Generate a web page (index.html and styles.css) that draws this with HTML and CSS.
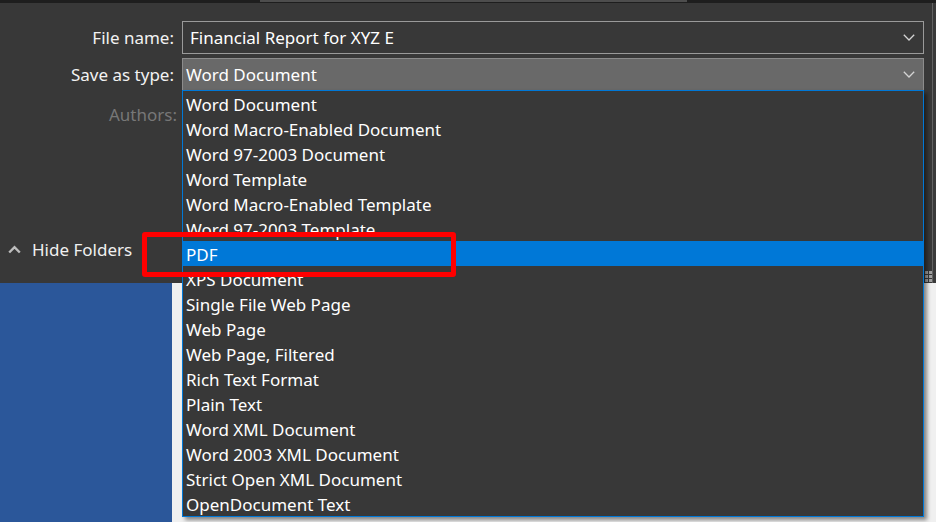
FILE: index.html
```html
<!DOCTYPE html>
<html>
<head>
<meta charset="utf-8">
<link rel="stylesheet" href="styles.css">
</head>
<body>
<div class="dialog">
  <div class="titlebar"><div class="tab"></div></div>
  <div class="form">
    <div class="lbl">File name:</div>
    <div class="field name"><span class="val">Financial Report for XYZ E</span>
      <svg class="chev" width="12" height="7" viewBox="0 0 12 7"><polyline points="0.8,0.8 6,6 11.2,0.8" fill="none" stroke="#d4d4d4" stroke-width="1.3"/></svg>
    </div>
    <div class="lbl">Save as type:</div>
    <div class="field sel"><span class="val">Word Document</span>
      <svg class="chev" width="12" height="7" viewBox="0 0 12 7"><polyline points="0.8,0.8 6,6 11.2,0.8" fill="none" stroke="#d4d4d4" stroke-width="1.3"/></svg>
    </div>
    <div class="lbl dim">Authors:</div>
    <div></div>
  </div>
  <div class="footer">
    <svg class="up" width="13" height="9" viewBox="0 0 13 9"><polyline points="1.2,7.5 6.5,2.2 11.8,7.5" fill="none" stroke="#bdbdbd" stroke-width="2.4"/></svg>
    <span class="hide">Hide Folders</span>
  </div>
  <div class="grip">
    <i></i><i></i><i></i><i></i><i></i><i></i>
  </div>
</div>
<div class="below">
  <div class="side"></div>
  <div class="rest"></div>
</div>
<ul class="list">
  <li>Word Document</li>
  <li>Word Macro-Enabled Document</li>
  <li>Word 97-2003 Document</li>
  <li>Word Template</li>
  <li>Word Macro-Enabled Template</li>
  <li>Word 97-2003 Template</li>
  <li class="active">PDF</li>
  <li>XPS Document</li>
  <li>Single File Web Page</li>
  <li>Web Page</li>
  <li>Web Page, Filtered</li>
  <li>Rich Text Format</li>
  <li>Plain Text</li>
  <li>Word XML Document</li>
  <li>Word 2003 XML Document</li>
  <li>Strict Open XML Document</li>
  <li>OpenDocument Text</li>
</ul>
<div class="callout"></div>
</body>
</html>
```
FILE: styles.css
```css
* { box-sizing: border-box; }
html, body { margin: 0; padding: 0; }
body {
  width: 936px;
  height: 522px;
  overflow: hidden;
  position: relative;
  background: #f0f0f0;
  font-family: "Noto Sans", "Open Sans", sans-serif;
  font-size: 17px;
  color: #ffffff;
}
.dialog {
  position: relative;
  height: 283px;
  display: flex;
  flex-direction: column;
  background: linear-gradient(to right, #383838 932px, #626262 932px, #626262 933px, #3a3a3a 933px);
}
.titlebar {
  height: 3px;
  background: #1e1e1e;
  padding-left: 260px;
}
.tab {
  width: 427px;
  height: 2px;
  background: #4d4d4d;
}
.form {
  margin-top: 18px;
  display: grid;
  grid-template-columns: 182px 742px;
  grid-template-rows: 33px 33px 36px;
  row-gap: 4px;
  align-items: center;
}
.lbl {
  text-align: right;
  padding-right: 8px;
  line-height: 24px;
  padding-top: 1px;
  color: #f2f2f2;
}
.lbl.dim {
  color: #777777;
  padding-right: 5px;
  align-self: start;
  padding-top: 8px;
}
.field {
  height: 33px;
  border: 1px solid #9a9a9a;
  display: flex;
  align-items: center;
  justify-content: space-between;
  padding: 0 8px 0 7px;
}
.field.sel {
  background: #696969;
  border-color: #8c8c8c;
  padding-left: 3px;
}
.val { line-height: 24px; padding-top: 1px; }
.chev { display: block; }
.footer {
  margin-top: auto;
  margin-bottom: 17px;
  height: 33px;
  display: flex;
  align-items: center;
  padding-left: 8px;
  gap: 11px;
}
.up { display: block; }
.hide { color: #f0f0f0; line-height: 24px; padding-top: 1px; }
.grip {
  position: absolute;
  right: 4px;
  bottom: 0;
  width: 10px;
  height: 12px;
  display: grid;
  grid-template-columns: 3px 3px;
  grid-auto-rows: 3px;
  column-gap: 1px;
  row-gap: 1px;
  justify-content: end;
}
.grip i { background: #a0a0a0; }
.below {
  height: 239px;
  display: flex;
}
.side { width: 172px; background: #2b579a; }
.rest { flex: 1; background: #f0f0f0; }
.list {
  position: absolute;
  left: 182px;
  top: 90px;
  width: 742px;
  margin: 0;
  padding: 0;
  list-style: none;
  background: #383838;
  border: 1px solid #0078d7;
  box-shadow: 3px 3px 4px rgba(0, 0, 0, 0.45);
}
.list li {
  height: 25px;
  line-height: 25px;
  padding-left: 3px;
  padding-top: 1px;
  white-space: nowrap;
}
.list li.active { background: #0078d7; }
.callout {
  position: absolute;
  left: 142px;
  top: 232px;
  width: 314px;
  height: 45px;
  border: 5px solid #ff0000;
  border-radius: 3px;
}
```
